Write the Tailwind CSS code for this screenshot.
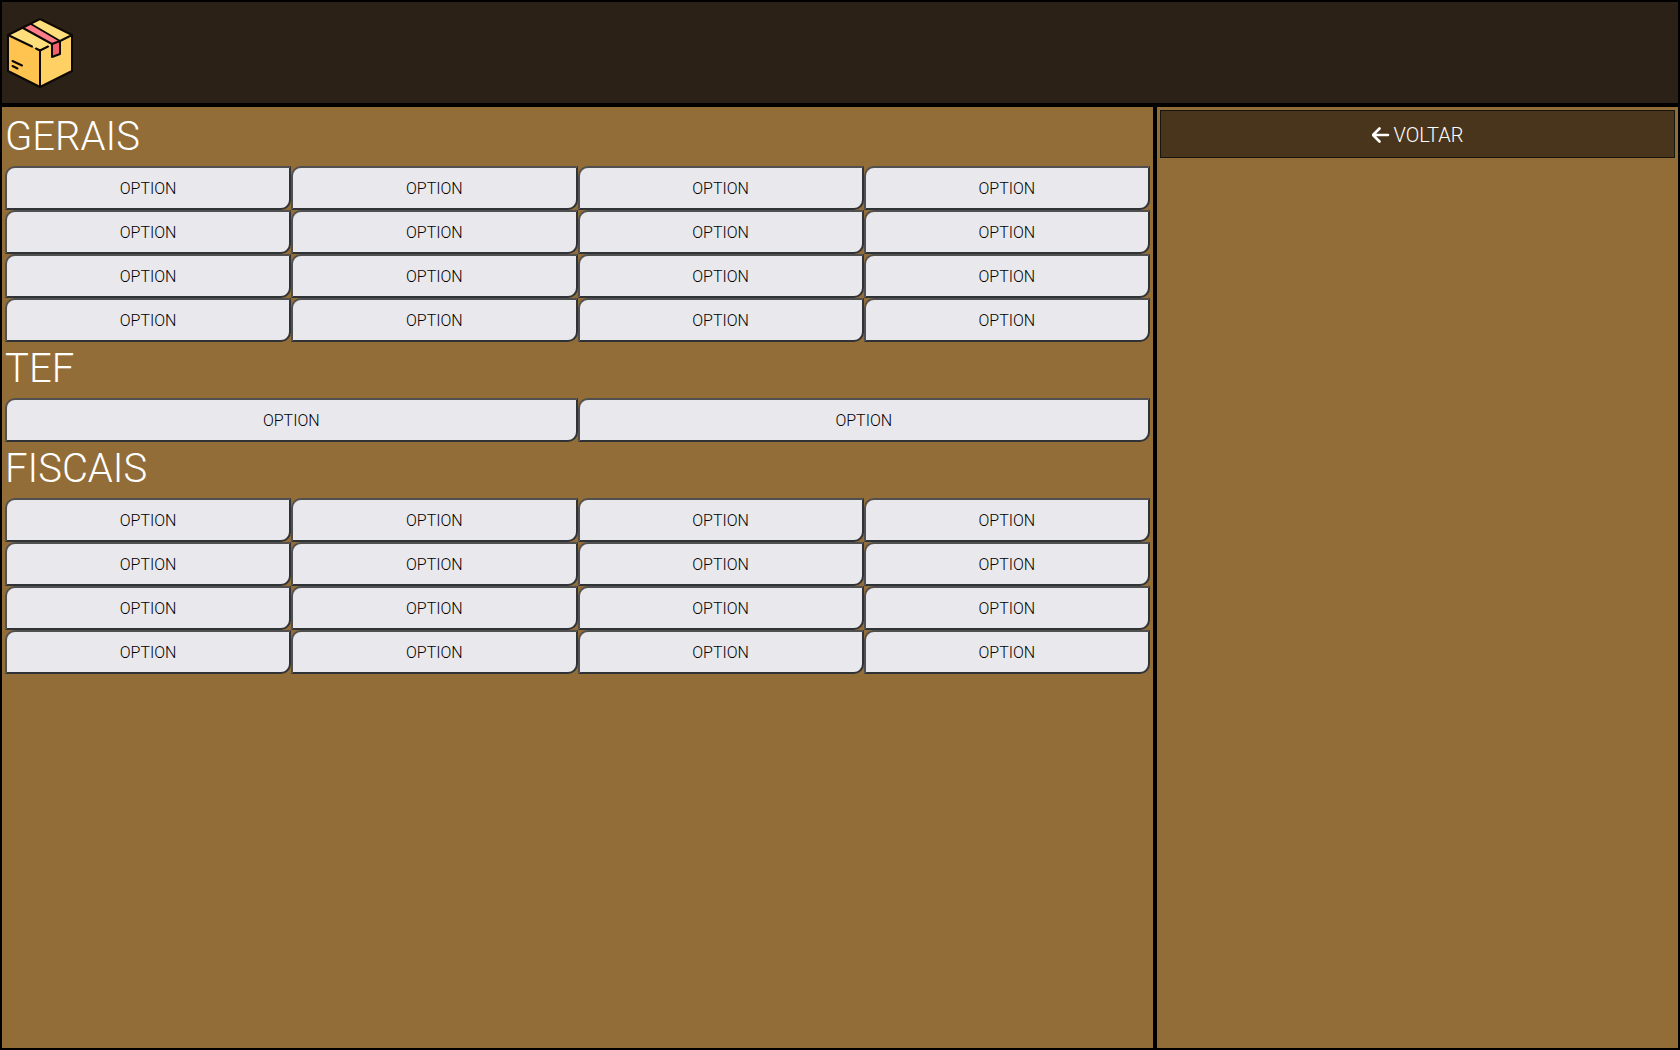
<!DOCTYPE html>
<html lang="pt-BR">
<head>
<meta charset="utf-8">
<title>Opções</title>
<script src="https://cdn.jsdelivr.net/npm/@tailwindcss/browser@4"></script>
</head>
<body class="flex h-screen flex-col border-2 border-black bg-[#926d37] font-['Roboto',sans-serif] font-light">
<header class="flex h-[105px] shrink-0 items-center border-b-4 border-black bg-[#2c2117] px-1">
  <svg class="size-[72px]" viewBox="0 0 72 72" fill="none" stroke="#0c0905" stroke-width="2" stroke-linecap="round" stroke-linejoin="round" role="img" aria-label="Caixa">
    <path d="M2 18 34 34V70L2 54Z" fill="#ffc34f" stroke="none"/>
    <path d="M34 34 66 18V54L34 70Z" fill="#ffd064" stroke="none"/>
    <path d="M2 18 34 2 66 18 34 34Z" fill="#ffdf7c" stroke="none"/>
    <path d="M17 11 25 7 54 24 46 27Z" fill="#fd7d88" stroke="none"/>
    <path d="M46 27 54 24V37L46 40Z" fill="#f4606c"/>
    <path d="M17 11 46 27M25 7 54 24"/>
    <path d="M34 33V70L2 54V18L34 2 66 18V54L34 70M2 18 26 29.500M30 31.500 34 33.500 42 29.500M54 24 66 18M6.500 44 16 48.500M6.500 49 11.500 51.500"/>
  </svg>
</header>
<div class="grid min-h-0 grow grid-cols-[1153fr_523fr]">
  <main class="border-r-2 border-black p-[3px]">
    <section>
      <h1 class="mb-0.5 text-[40px] leading-[54px] text-white">GERAIS</h1>
      <div id="gerais" class="grid grid-cols-4"></div>
    </section>
    <section>
      <h1 class="mb-0.5 text-[40px] leading-[54px] text-white">TEF</h1>
      <div id="tef" class="grid grid-cols-2"></div>
    </section>
    <section>
      <h1 class="mb-0.5 text-[40px] leading-[54px] text-white">FISCAIS</h1>
      <div id="fiscais" class="grid grid-cols-4"></div>
    </section>
  </main>
  <aside class="border-l-2 border-black p-[3px]">
    <button type="button" class="flex h-12 w-full items-center justify-center gap-1 border border-[#17150f] bg-[#49351c] pt-0.5 text-xl text-white">
      <svg class="h-5 w-[18px]" viewBox="2 0 18 20" fill="none" stroke="currentColor" stroke-width="2.6" stroke-linecap="round" stroke-linejoin="round" aria-hidden="true"><path d="M9.500 3.500 3 10l6.500 6.500M3 10H18"/></svg>
      VOLTAR
    </button>
  </aside>
</div>
<template id="option">
  <button type="button" class="h-11 rounded-tl-[10px] rounded-br-[10px] border-2 border-t-[#505050] border-l-[#505050] border-r-[#303336] border-b-[#303336] bg-[#e9e8ed] pt-0.5 text-base text-black">OPTION</button>
</template>
<script>
const option = document.getElementById('option');
for (const [id, count] of [['gerais', 16], ['tef', 2], ['fiscais', 16]]) {
  const group = document.getElementById(id);
  for (let i = 0; i < count; i++) group.append(option.content.cloneNode(true));
}
</script>
</body>
</html>
